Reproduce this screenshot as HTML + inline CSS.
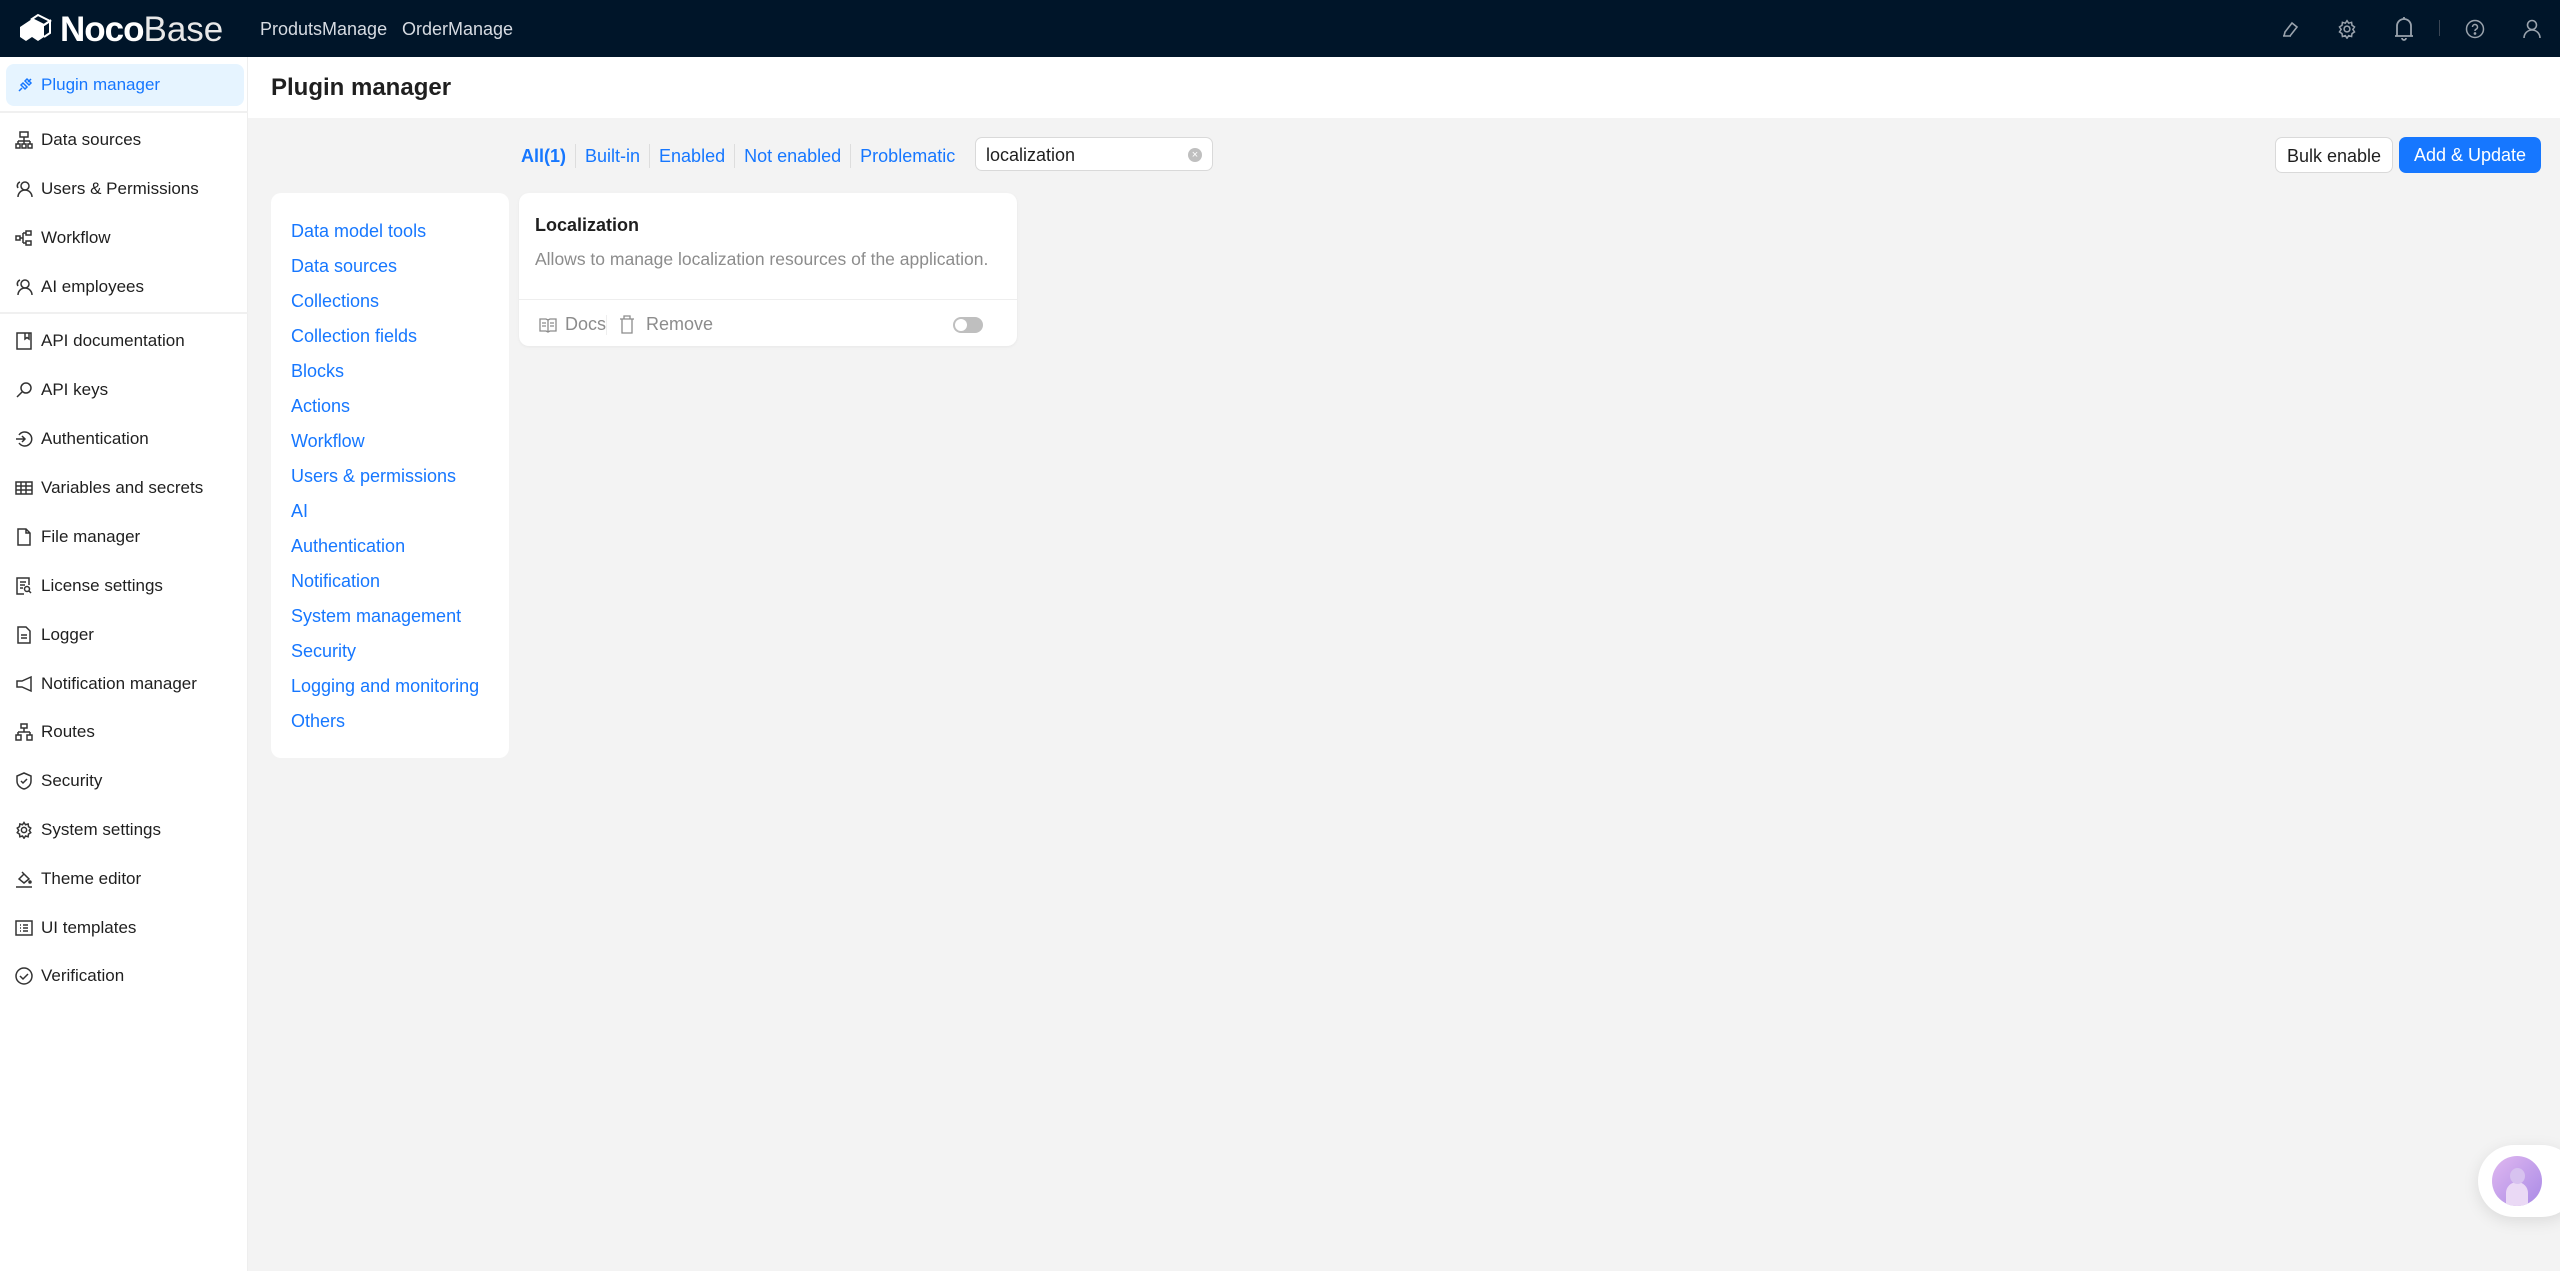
<!DOCTYPE html>
<html><head><meta charset="utf-8"><style>
*{box-sizing:border-box;margin:0;padding:0}
body{width:2560px;height:1271px;overflow:hidden;background:#f3f3f3;font-family:"Liberation Sans",sans-serif;position:relative;color:#1f1f1f}
.hdr{position:absolute;left:0;top:0;width:2560px;height:57px;background:#001529}
.logo{position:absolute;left:18px;top:11px;color:#fff;font-size:35px;line-height:38px;letter-spacing:-1px}
.logo b{font-weight:700}
.logo span{font-weight:300;color:#e8e8e8;letter-spacing:0}
.nav{position:absolute;top:19px;font-size:18px;color:#d6dbe2}
.side{position:absolute;left:0;top:57px;width:248px;height:1214px;background:#fff;border-right:1px solid #eee}
.it{position:absolute;left:0;width:248px;height:40px;font-size:17px;line-height:42px;padding-left:41px;color:#1f1f1f}
.it svg{position:absolute;left:15px;top:12px}
.sel{left:6px;width:238px;height:42px;background:#e6f4ff;color:#1677ff;border-radius:8px;padding-left:35px}
.sel svg{left:10px}
.dv{position:absolute;left:0;width:248px;height:2px;background:#f0f0f0}
.title{position:absolute;left:248px;top:57px;width:2312px;height:61px;background:#fff}
.title div{position:absolute;left:23px;top:17px;font-size:24px;font-weight:600;color:#1f1f1f}
.tabs{position:absolute;top:144px;font-size:18px;color:#1677ff;display:flex;left:521px}
.tabs span{padding:0 9px;border-left:1px solid #ddd;line-height:24px}
.tabs span:first-child{border:none;padding-left:0;font-weight:700}
.srch{position:absolute;left:975px;top:137px;width:238px;height:34px;background:#fff;border:1px solid #d9d9d9;border-radius:7px;font-size:18px;line-height:34px;padding-left:10px}
.clr{position:absolute;right:10px;top:10px;width:14px;height:14px;border-radius:50%;background:#bfbfbf;color:#fff;font-size:11px;line-height:14px;text-align:center}
.btn{position:absolute;top:137px;height:36px;border-radius:7px;font-size:18px;line-height:36px;text-align:center}
.card{position:absolute;background:#fff;border-radius:10px}
.cat a{position:absolute;left:20px;color:#1677ff;font-size:18px;text-decoration:none}
</style></head><body>
<div class="hdr">
 <svg style="position:absolute;left:18px;top:13px" width="36" height="32" viewBox="0 0 36 32"><path d="M2 14 L14 6 L26 12 L26 24 L20 28 L14 24 L8 28 L2 24Z" fill="#fff"/><path d="M14 6 L20 2 L32 8 L26 12Z" fill="none" stroke="#fff" stroke-width="2"/><path d="M26 12 L32 8 L32 20 L26 24" fill="none" stroke="#fff" stroke-width="2"/></svg>
 <div class="logo" style="left:60px"><b>Noco</b><span>Base</span></div>
 <div class="nav" style="left:260px">ProdutsManage</div>
 <div class="nav" style="left:402px">OrderManage</div>
 <svg style="position:absolute;left:2280px;top:20px" width="20" height="18" viewBox="0 0 20 18" fill="none" stroke="#9aa3ad" stroke-width="1.6"><path d="M3 16h8M5 12l7-9 5 4-7 9H4z"/></svg>
 <svg style="position:absolute;left:2337px;top:19px" width="20" height="20" viewBox="0 0 24 24" fill="none" stroke="#9aa3ad" stroke-width="1.8"><circle cx="12" cy="12" r="3.5"/><path d="M12 2l2 3 3.5-1 .5 3.5 3 2-2 3 2 3-3 2-.5 3.5-3.5-1-2 3-2-3-3.5 1-.5-3.5-3-2 2-3-2-3 3-2 .5-3.5 3.5 1z"/></svg>
 <svg style="position:absolute;left:2394px;top:16px" width="20" height="26" viewBox="0 0 20 26" fill="none" stroke="#9aa3ad" stroke-width="1.8"><path d="M3 20V10a7 7 0 0 1 14 0v10M1 20h18M10 1v2M8 22a2 2 0 0 0 4 0"/></svg>
 <div style="position:absolute;left:2439px;top:20px;width:1px;height:16px;background:#3a4655"></div>
 <svg style="position:absolute;left:2465px;top:19px" width="20" height="20" viewBox="0 0 20 20" fill="none" stroke="#9aa3ad" stroke-width="1.5"><circle cx="10" cy="10" r="8.5"/><path d="M7.5 8a2.5 2.5 0 1 1 3.5 2.3c-.7.3-1 .8-1 1.5V12"/><circle cx="10" cy="14.5" r=".6" fill="#9aa3ad"/></svg>
 <svg style="position:absolute;left:2523px;top:19px" width="18" height="20" viewBox="0 0 18 20" fill="none" stroke="#9aa3ad" stroke-width="1.6"><circle cx="9" cy="6" r="4.5"/><path d="M1 19a8 8 0 0 1 16 0"/></svg>
</div>
<div class="side">
 <div class="it sel" style="top:7px"><svg width="18" height="18" viewBox="0 0 18 18" fill="none" stroke="#1677ff" stroke-width="1.5"><path d="M3 15l3-3M12 6l3-3M5 9l4 4 2-2-4-4zM9 5l4 4 2-2-4-4z"/></svg>Plugin manager</div>
 <div class="dv" style="top:54px"></div>
 <div class="it" style="top:62px"><svg width="18" height="18" viewBox="0 0 18 18" fill="none" stroke="#333" stroke-width="1.5"><rect x="5" y="1" width="8" height="5"/><path d="M9 6v4M3 10h12M3 10v3M9 10v3M15 10v3"/><rect x="1" y="13" width="4" height="4"/><rect x="7" y="13" width="4" height="4"/><rect x="13" y="13" width="4" height="4"/></svg>Data sources</div>
 <div class="it" style="top:111px"><svg width="18" height="18" viewBox="0 0 18 18" fill="none" stroke="#333" stroke-width="1.5"><circle cx="10" cy="6" r="4"/><path d="M3 17a7 7 0 0 1 14 0M5 2a4 4 0 0 0-2 6"/></svg>Users &amp; Permissions</div>
 <div class="it" style="top:160px"><svg width="18" height="18" viewBox="0 0 18 18" fill="none" stroke="#333" stroke-width="1.5"><rect x="1" y="7" width="4" height="4"/><rect x="11" y="2" width="5" height="4"/><rect x="11" y="12" width="5" height="4"/><path d="M5 9h3M8 4v10M8 4h3M8 14h3"/></svg>Workflow</div>
 <div class="it" style="top:209px"><svg width="18" height="18" viewBox="0 0 18 18" fill="none" stroke="#333" stroke-width="1.5"><circle cx="10" cy="6" r="4"/><path d="M3 17a7 7 0 0 1 14 0M5 2a4 4 0 0 0-2 6"/></svg>AI employees</div>
 <div class="dv" style="top:255px"></div>
 <div class="it" style="top:263px"><svg width="18" height="18" viewBox="0 0 18 18" fill="none" stroke="#333" stroke-width="1.5"><rect x="2" y="1" width="14" height="16"/><path d="M10 1v6l2-1.5 2 1.5V1"/></svg>API documentation</div>
 <div class="it" style="top:312px"><svg width="18" height="18" viewBox="0 0 18 18" fill="none" stroke="#333" stroke-width="1.5"><circle cx="11" cy="7" r="5"/><path d="M7 11l-5 5"/></svg>API keys</div>
 <div class="it" style="top:361px"><svg width="18" height="18" viewBox="0 0 18 18" fill="none" stroke="#333" stroke-width="1.5"><path d="M4 5a7 7 0 1 1 0 8M1 9h9M7 6l3 3-3 3"/></svg>Authentication</div>
 <div class="it" style="top:410px"><svg width="18" height="18" viewBox="0 0 18 18" fill="none" stroke="#333" stroke-width="1.5"><rect x="1" y="3" width="16" height="12"/><path d="M1 7h16M1 11h16M6 3v12M11 3v12"/></svg>Variables and secrets</div>
 <div class="it" style="top:459px"><svg width="18" height="18" viewBox="0 0 18 18" fill="none" stroke="#333" stroke-width="1.5"><path d="M3 1h8l4 4v12H3zM11 1v4h4"/></svg>File manager</div>
 <div class="it" style="top:508px"><svg width="18" height="18" viewBox="0 0 18 18" fill="none" stroke="#333" stroke-width="1.5"><path d="M9 17H2V1h12v7M5 5h6M5 8h5M5 11h3"/><circle cx="12" cy="12" r="2.5"/><path d="M14 14l2 2"/></svg>License settings</div>
 <div class="it" style="top:557px"><svg width="18" height="18" viewBox="0 0 18 18" fill="none" stroke="#333" stroke-width="1.5"><path d="M3 1h8l4 4v12H3zM6 9h6M6 12h6"/></svg>Logger</div>
 <div class="it" style="top:606px"><svg width="18" height="18" viewBox="0 0 18 18" fill="none" stroke="#333" stroke-width="1.5"><path d="M16 2v14L7 12H2V6h5z"/></svg>Notification manager</div>
 <div class="it" style="top:654px"><svg width="18" height="18" viewBox="0 0 18 18" fill="none" stroke="#333" stroke-width="1.5"><rect x="6" y="1" width="6" height="4"/><path d="M9 5v4M3 9h12M3 9v3M15 9v3"/><rect x="1" y="12" width="5" height="5"/><rect x="12" y="12" width="5" height="5"/></svg>Routes</div>
 <div class="it" style="top:703px"><svg width="18" height="18" viewBox="0 0 18 18" fill="none" stroke="#333" stroke-width="1.5"><path d="M9 1l7 3v5c0 4-3 7-7 8-4-1-7-4-7-8V4z"/><path d="M6 9l2 2 4-4"/></svg>Security</div>
 <div class="it" style="top:752px"><svg width="18" height="18" viewBox="0 0 24 24" fill="none" stroke="#333" stroke-width="2"><circle cx="12" cy="12" r="3.5"/><path d="M12 2l2 3 3.5-1 .5 3.5 3 2-2 3 2 3-3 2-.5 3.5-3.5-1-2 3-2-3-3.5 1-.5-3.5-3-2 2-3-2-3 3-2 .5-3.5 3.5 1z"/></svg>System settings</div>
 <div class="it" style="top:801px"><svg width="18" height="18" viewBox="0 0 18 18" fill="none" stroke="#333" stroke-width="1.5"><path d="M1 17h16M4 9l5-5 5 5-5 4zM7 2l2 2"/><circle cx="15" cy="12" r="1" fill="#333"/></svg>Theme editor</div>
 <div class="it" style="top:850px"><svg width="18" height="18" viewBox="0 0 18 18" fill="none" stroke="#333" stroke-width="1.5"><rect x="1" y="2" width="16" height="14"/><path d="M5 6h1M8 6h5M5 9h1M8 9h5M5 12h1M8 12h5"/></svg>UI templates</div>
 <div class="it" style="top:898px"><svg width="18" height="18" viewBox="0 0 18 18" fill="none" stroke="#333" stroke-width="1.5"><circle cx="9" cy="9" r="8"/><path d="M5 9l3 3 5-5"/></svg>Verification</div>
</div>
<div class="title"><div>Plugin manager</div></div>
<div class="tabs"><span>All(1)</span><span>Built-in</span><span>Enabled</span><span>Not enabled</span><span>Problematic</span></div>
<div class="srch">localization<div class="clr">×</div></div>
<div class="btn" style="left:2275px;width:118px;background:#fff;border:1px solid #d9d9d9">Bulk enable</div>
<div class="btn" style="left:2399px;width:142px;background:#1677ff;color:#fff">Add &amp; Update</div>
<div class="card cat" style="left:271px;top:193px;width:238px;height:565px">
 <a style="top:28px">Data model tools</a><a style="top:63px">Data sources</a><a style="top:98px">Collections</a><a style="top:133px">Collection fields</a><a style="top:168px">Blocks</a><a style="top:203px">Actions</a><a style="top:238px">Workflow</a><a style="top:273px">Users &amp; permissions</a><a style="top:308px">AI</a><a style="top:343px">Authentication</a><a style="top:378px">Notification</a><a style="top:413px">System management</a><a style="top:448px">Security</a><a style="top:483px">Logging and monitoring</a><a style="top:518px">Others</a>
</div>
<div class="card" style="left:519px;top:193px;width:498px;height:153px;box-shadow:0 1px 3px rgba(0,0,0,.05)">
 <div style="position:absolute;left:16px;top:22px;font-size:18px;font-weight:600">Localization</div>
 <div style="position:absolute;left:16px;top:56px;font-size:17.5px;color:#8c8c8c">Allows to manage localization resources of the application.</div>
 <div style="position:absolute;left:0;top:106px;width:498px;height:1px;background:#eee"></div>
 <svg style="position:absolute;left:20px;top:124px" width="18" height="16" viewBox="0 0 18 16" fill="none" stroke="#8c8c8c" stroke-width="1.3"><path d="M1 2h6l2 1 2-1h6v12h-6l-2 1-2-1H1zM9 3v12M3 6h4M3 9h4M11 6h4M11 9h4"/></svg>
 <div style="position:absolute;left:46px;top:121px;font-size:18px;color:#8c8c8c">Docs</div>
 <div style="position:absolute;left:87px;top:122px;width:1px;height:20px;background:#eee"></div>
 <svg style="position:absolute;left:100px;top:122px" width="16" height="19" viewBox="0 0 16 19" fill="none" stroke="#8c8c8c" stroke-width="1.3"><path d="M1 4h14M5 4V1h6v3M3 4v14h10V4"/></svg>
 <div style="position:absolute;left:127px;top:121px;font-size:18px;color:#8c8c8c">Remove</div>
 <div style="position:absolute;left:434px;top:124px;width:30px;height:16px;border-radius:8px;background:#bfbfbf"><div style="position:absolute;left:2px;top:2px;width:12px;height:12px;border-radius:50%;background:#fff"></div></div>
</div>
<div style="position:absolute;left:2478px;top:1145px;width:100px;height:72px;border-radius:36px;background:#fff;box-shadow:0 4px 16px rgba(0,0,0,.1)">
 <div style="position:absolute;left:14px;top:11px;width:50px;height:50px;border-radius:50%;background:linear-gradient(135deg,#e0b8f0,#a98ae6);overflow:hidden"><div style="position:absolute;left:14px;top:26px;width:22px;height:26px;border-radius:11px 11px 0 0;background:#ead9f5"></div><div style="position:absolute;left:18px;top:12px;width:15px;height:16px;border-radius:50%;background:#d7c2ef"></div></div>
</div>
</body></html>
